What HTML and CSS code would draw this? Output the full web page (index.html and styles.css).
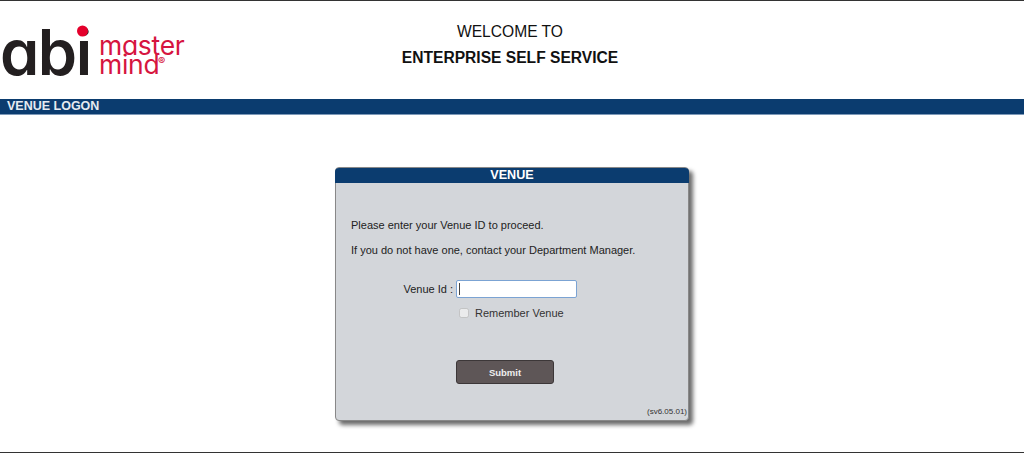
FILE: index.html
```html
<!DOCTYPE html>
<html lang="en">
<head>
  <meta charset="UTF-8">
  <title>Enterprise Self Service</title>
  <link rel="stylesheet" href="styles.css">
</head>
<body>
  <div class="page">
    <!-- Logo and welcome text -->
    <header class="top-header">
      <div class="logo">
        <svg class="logo-art" width="190" height="90" viewBox="0 0 190 90">
          <text class="logo-abi" x="0" y="75">abi</text>
          <circle class="logo-dot" cx="82.5" cy="31" r="5.5"></circle>
          <text class="logo-word" x="99" y="55">master</text>
          <text class="logo-word" x="99" y="74">mind</text>
          <text class="logo-reg" x="158" y="65">®</text>
        </svg>
      </div>
      <div class="welcome">
        <div class="welcome-line">WELCOME TO</div>
        <div class="welcome-name">ENTERPRISE SELF SERVICE</div>
      </div>
    </header>

    <div class="title-bar">VENUE LOGON</div>

    <main class="content">
      <form class="card">
        <div class="card-title">VENUE</div>
        <div class="card-body">
          <p class="card-text">Please enter your Venue ID to proceed.</p>
          <p class="card-text">If you do not have one, contact your Department Manager.</p>

          <div class="form-row id-row">
            <label class="field-label" for="venueId">Venue Id :</label>
            <input class="field-input" id="venueId" type="text">
          </div>
          <div class="form-row remember-row">
            <label class="remember">
              <input class="remember-box" type="checkbox" disabled>
              <span>Remember Venue</span>
            </label>
          </div>
          <div class="form-row submit-row">
            <button class="submit-btn" type="button">Submit</button>
          </div>
        </div>
        <div class="version">(sv6.05.01)</div>
      </form>
    </main>
  </div>
</body>
</html>
```

FILE: styles.css
```css
html, body {
  margin: 0;
  padding: 0;
  height: 100%;
}

* {
  box-sizing: border-box;
}

body {
  font-family: "Liberation Sans", Arial, sans-serif;
  background-color: #fff;
  color: #222;
  overflow: hidden;
}

.page {
  height: 453px;
  display: flex;
  flex-direction: column;
  border-top: 1px solid #333;
  border-bottom: 1px solid #333;
}

/* Header */
.top-header {
  height: 98px;
  display: flex;
}

.logo {
  width: 190px;
  flex-shrink: 0;
}

.logo-art {
  display: block;
  margin-top: -1px;
}

.logo-abi {
  font-family: Inter, sans-serif;
  font-size: 63px;
  font-weight: 600;
  font-feature-settings: "cv11";
  letter-spacing: -1.5px;
  fill: #231f20;
}

.logo-dot {
  fill: #e4002b;
}

.logo-word {
  font-family: Inter, sans-serif;
  font-size: 26.5px;
  font-feature-settings: "cv11";
  letter-spacing: -0.3px;
  fill: #d6153f;
}

.logo-reg {
  font-family: Inter, sans-serif;
  font-size: 11px;
  font-weight: 700;
  fill: #d6153f;
}

.welcome {
  width: 640px;
  padding-top: 21px;
  text-align: center;
  color: #111;
}

.welcome-line {
  font-size: 15.6px;
  line-height: 19px;
  margin-bottom: 7px;
}

.welcome-name {
  font-size: 15.6px;
  line-height: 19px;
  font-weight: bold;
}

.title-bar {
  height: 16px;
  padding-left: 7px;
  background-color: #0b3c6f;
  border-bottom: 1px solid #7d99b8;
  color: #e6ebf1;
  font-size: 12.5px;
  line-height: 15px;
  font-weight: bold;
}

/* Venue card */
.content {
  flex: 1;
  display: flex;
  justify-content: center;
  padding: 52px 0 0;
}

.card {
  position: relative;
  width: 354px;
  height: 254px;
  background-color: #d3d6da;
  border: 1px solid #888;
  border-radius: 4px;
  box-shadow: 4px 4px 4px #6b6b6b;
}

.card-title {
  height: 15px;
  margin: 0 -1px;
  background-color: #0b3c6f;
  border-radius: 4px 4px 0 0;
  color: #fff;
  font-size: 12.6px;
  line-height: 14px;
  font-weight: bold;
  text-align: center;
}

.card-body {
  padding: 35px 15px 0;
}

.card-text {
  margin: 0 0 11px;
  font-size: 11px;
  line-height: 14px;
  color: #222;
}

.form-row {
  display: grid;
  grid-template-columns: 105px 1fr;
  align-items: center;
}

.id-row {
  margin-top: 23px;
}

.field-label {
  padding-right: 3px;
  text-align: right;
  font-size: 11px;
}

.field-input {
  width: 121px;
  height: 18px;
  padding: 0;
  border: 1px solid #7ba3d3;
  border-radius: 2px;
  outline: none;
  background: #fff linear-gradient(#444, #444) 2px 2px / 1px 12px no-repeat;
}

.remember-row {
  margin-top: 8px;
}

.remember {
  grid-column: 2;
  display: flex;
  align-items: center;
  font-size: 11px;
  line-height: 14px;
  color: #333;
}

.remember-box {
  width: 10px;
  height: 10px;
  margin: 0 6px 0 3px;
}

.submit-row {
  margin-top: 40px;
}

.submit-btn {
  grid-column: 2;
  width: 98px;
  height: 24px;
  padding: 0;
  background-color: #5e5657;
  border: 1px solid #3c3738;
  border-radius: 3px;
  color: #eee;
  font-family: inherit;
  font-size: 9.5px;
  font-weight: bold;
}

.version {
  position: absolute;
  right: 1px;
  bottom: 3px;
  font-size: 8px;
  line-height: 10px;
  color: #333;
}
```
